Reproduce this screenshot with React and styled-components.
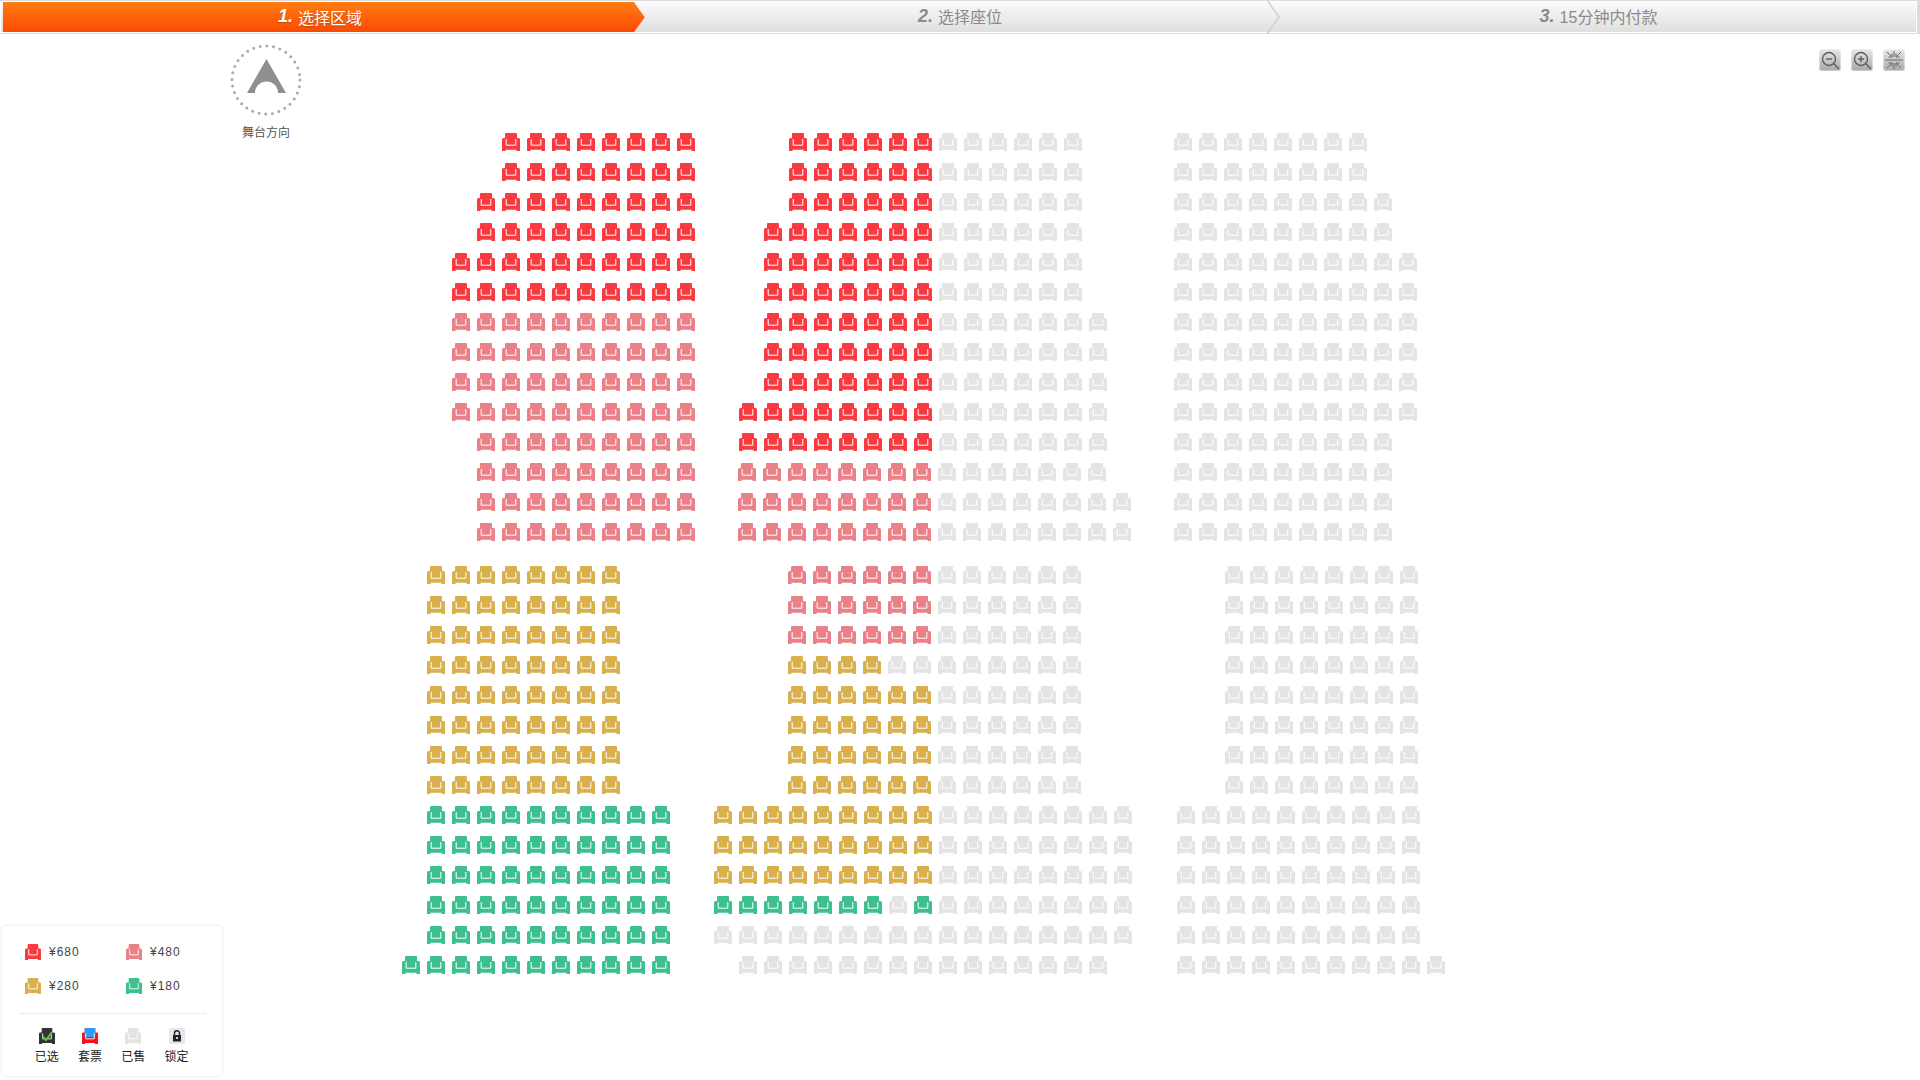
import React from 'react';
import styled, { createGlobalStyle } from 'styled-components';

const TONES = {
  r: '#f93a40',
  p: '#ea8088',
  y: '#dab04c',
  g: '#3cc08f',
  x: '#e4e4e4',
};

const CELL = 25;

// each row: blocks of [page x, seat runs]
const top1 = [[502, 'r8'], [789, 'r6 x6'], [1174, 'x8']];
const low1 = [[427, 'y8'], [788, 'p6 x6'], [1225, 'x8']];
const low2 = [[427, 'y8'], [788, 'y6 x6'], [1225, 'x8']];
const low3 = [[427, 'g10'], [714, 'y9 x8'], [1177, 'x10']];

const upperRows = [
  top1,
  top1,
  [[477, 'r9'], [789, 'r6 x6'], [1174, 'x9']],
  [[477, 'r9'], [764, 'r7 x6'], [1174, 'x9']],
  [[452, 'r10'], [764, 'r7 x6'], [1174, 'x10']],
  [[452, 'r10'], [764, 'r7 x6'], [1174, 'x10']],
  [[452, 'p10'], [764, 'r7 x7'], [1174, 'x10']],
  [[452, 'p10'], [764, 'r7 x7'], [1174, 'x10']],
  [[452, 'p10'], [764, 'r7 x7'], [1174, 'x10']],
  [[452, 'p10'], [739, 'r8 x7'], [1174, 'x10']],
  [[477, 'p9'], [739, 'r8 x7'], [1174, 'x9']],
  [[477, 'p9'], [738, 'p8 x7'], [1174, 'x9']],
  [[477, 'p9'], [738, 'p8 x8'], [1174, 'x9']],
  [[477, 'p9'], [738, 'p8 x8'], [1174, 'x9']],
];

const lowerRows = [
  low1,
  low1,
  low1,
  [[427, 'y8'], [788, 'y4 x8'], [1225, 'x8']],
  low2,
  low2,
  low2,
  low2,
  low3,
  low3,
  low3,
  [[427, 'g10'], [714, 'g7 x1 g1 x8'], [1177, 'x10']],
  [[427, 'g10'], [714, 'x17'], [1177, 'x10']],
  [[402, 'g11'], [739, 'x15'], [1177, 'x11']],
];

const expand = (runs) =>
  runs.split(' ').flatMap((run) => Array(Number(run.slice(1))).fill(run[0]));

function Chair({ tone, size = 18, back }) {
  return (
    <ChairSvg viewBox="0 0 18 18" $size={size} $color={tone}>
      <path d="M4 0H14Q15 0 15 1V5H16.5Q18 5 18 6.5V18H14.5V16.8H3.5V18H0V6.5Q0 5 1.5 5H3V1Q3 0 4 0Z" />
      {back && <path d="M4 0H14Q15 0 15 1V10H3V1Q3 0 4 0Z" fill={back} />}
      <path d="M4.2 6V12.2H13.8V6" fill="none" stroke="#fff" strokeWidth="1" />
    </ChairSvg>
  );
}

function SeatRow({ blocks, first }) {
  let end = 0;
  return (
    <RowLine $first={first}>
      {blocks.map(([x, runs]) => {
        const seats = expand(runs);
        const offset = x - end;
        end = x + seats.length * CELL;
        return (
          <Block key={x} $offset={offset}>
            {seats.map((s, i) => (
              <Cell key={i}>
                <Chair tone={TONES[s]} />
              </Cell>
            ))}
          </Block>
        );
      })}
    </RowLine>
  );
}

function ZoomOut() {
  return (
    <ToolSvg viewBox="0 0 22 22">
      <circle cx="10" cy="10" r="6.5" />
      <path d="M7 10H13" />
      <path d="M15 15L20 20" />
    </ToolSvg>
  );
}

function ZoomIn() {
  return (
    <ToolSvg viewBox="0 0 22 22">
      <circle cx="10" cy="10" r="6.5" />
      <path d="M7 10H13M10 7V13" />
      <path d="M15 15L20 20" />
    </ToolSvg>
  );
}

function Fit() {
  return (
    <ToolSvg viewBox="0 0 22 22" $thin>
      <path d="M11 2V8M2 11H20M11 14V20M4 3L9 8M9 4.5V8H5.5M18 3L13 8M13 4.5V8H16.5M4 19L9 14M9 17.5V14H5.5M18 19L13 14M13 17.5V14H16.5" />
    </ToolSvg>
  );
}

export default function App() {
  return (
    <Page>
      <GlobalStyle />
      <Steps>
        <ActiveStep>
          <StepNo>1.</StepNo> 选择区域
          <Chevron viewBox="0 0 16 34" $right={-3}>
            <path d="M2 0L14 17L2 34" stroke="#fff" />
          </Chevron>
        </ActiveStep>
        <Step $pad={5}>
          <StepNo>2.</StepNo> 选择座位
          <Chevron viewBox="0 0 16 34" $right={-1}>
            <path d="M2 0L14 17L2 34" stroke="#cfcfcf" />
          </Chevron>
        </Step>
        <Step>
          <StepNo>3.</StepNo> 15分钟内付款
        </Step>
      </Steps>

      <TopBar>
        <Compass>
          <svg viewBox="0 0 72 72" width="72" height="72">
            <circle cx="36" cy="36" r="34" fill="none" stroke="#aaa" strokeWidth="3" strokeLinecap="round" strokeDasharray="0 6.7" />
            <path d="M36.5 15L56 49H48A11.5 11.5 0 0 0 25 49H17Z" fill="#8f8f8f" />
          </svg>
          <CompassLabel>舞台方向</CompassLabel>
        </Compass>
        <Tools>
          <ToolButton><ZoomOut /></ToolButton>
          <ToolButton><ZoomIn /></ToolButton>
          <ToolButton><Fit /></ToolButton>
        </Tools>
      </TopBar>

      <SeatMap>
        {upperRows.map((blocks, i) => (
          <SeatRow key={i} blocks={blocks} />
        ))}
        {lowerRows.map((blocks, i) => (
          <SeatRow key={i} blocks={blocks} first={i === 0} />
        ))}
      </SeatMap>

      <Legend>
        <Prices>
          <Price><Chair tone={TONES.r} size={16} />¥680</Price>
          <Price><Chair tone={TONES.p} size={16} />¥480</Price>
          <Price><Chair tone={TONES.y} size={16} />¥280</Price>
          <Price><Chair tone={TONES.g} size={16} />¥180</Price>
        </Prices>
        <Divider />
        <States>
          <StateItem>
            <StateIcon>
              <Chair tone="#333" size={16} />
              <Tick viewBox="0 0 16 16">
                <path d="M4 9L7 12L13 4" />
              </Tick>
            </StateIcon>
            已选
          </StateItem>
          <StateItem>
            <StateIcon><Chair tone="#f5101c" size={16} back="#2f9bf5" /></StateIcon>
            套票
          </StateItem>
          <StateItem>
            <StateIcon><Chair tone={TONES.x} size={16} /></StateIcon>
            已售
          </StateItem>
          <StateItem>
            <StateIcon>
              <LockBox>
                <svg viewBox="0 0 16 16" width="16" height="16">
                  <path d="M5.5 7V5.2A2.5 2.5 0 0 1 10.5 5.2V7" fill="none" stroke="#222" strokeWidth="1.4" />
                  <path d="M4 7H12V13.5H4Z" fill="#222" />
                  <circle cx="8" cy="10" r="1.1" fill="#fff" />
                </svg>
              </LockBox>
            </StateIcon>
            锁定
          </StateItem>
        </States>
      </Legend>
    </Page>
  );
}

const GlobalStyle = createGlobalStyle`
  html, body {
    margin: 0;
    padding: 0;
    background: #fff;
    font-family: "Liberation Sans", "Noto Sans CJK SC", sans-serif;
  }
`;

const Page = styled.div`
  position: relative;
  width: 1920px;
  height: 1080px;
  overflow: hidden;
`;

const Steps = styled.div`
  display: grid;
  grid-template-columns: 645px 635px 1fr;
  box-sizing: border-box;
  height: 34px;
  border: solid #dcdcdc;
  border-width: 1px 3px 1px 0;
  background: linear-gradient(#fbfbfb, #dedede);
  box-shadow: inset 0 0 0 1px #fff;
`;

const Step = styled.div`
  position: relative;
  display: flex;
  align-items: center;
  justify-content: center;
  gap: 5px;
  padding-right: ${(p) => p.$pad || 0}px;
  padding-bottom: 2px;
  font-size: 16px;
  color: #8a8a8a;
`;

const ActiveStep = styled(Step)`
  margin: 1px 0 1px 3px;
  padding-right: 8px;
  padding-bottom: 1px;
  color: #fff;
  background: linear-gradient(#ff7d12, #fb4a03);
  clip-path: polygon(0 0, calc(100% - 11px) 0, 100% 50%, calc(100% - 11px) 100%, 0 100%);
  text-shadow: 0 1px 1px rgba(120, 40, 0, 0.4);
`;

const StepNo = styled.b`
  font-style: italic;
  font-size: 18px;
`;

const Chevron = styled.svg`
  position: absolute;
  top: -1px;
  right: ${(p) => p.$right}px;
  width: 16px;
  height: 34px;
  fill: none;
  stroke-width: 1.4;
`;

const TopBar = styled.div`
  display: flex;
  justify-content: space-between;
  align-items: flex-start;
  height: 99px;
  padding: 0 15px 0 230px;
`;

const Compass = styled.div`
  display: flex;
  flex-direction: column;
  align-items: center;
  width: 72px;
  padding-top: 10px;
  svg {
    display: block;
  }
`;

const CompassLabel = styled.div`
  margin-top: 10px;
  font-size: 12px;
  line-height: 14px;
  color: #555;
  white-space: nowrap;
`;

const Tools = styled.div`
  display: flex;
  gap: 10px;
  margin-top: 15px;
`;

const ToolButton = styled.div`
  width: 22px;
  height: 22px;
  border-radius: 3px;
  background: linear-gradient(#e8e8e8, #a9a9a9);
  box-shadow: inset 0 0 0 1px rgba(255, 255, 255, 0.4);
`;

const ToolSvg = styled.svg`
  display: block;
  width: 22px;
  height: 22px;
  fill: none;
  stroke: ${(p) => (p.$thin ? '#6a6a6a' : '#5c5c5c')};
  stroke-width: ${(p) => (p.$thin ? 1 : 1.4)};
`;

const SeatMap = styled.div`
  display: flex;
  flex-direction: column;
`;

const RowLine = styled.div`
  display: flex;
  height: 30px;
  margin-top: ${(p) => (p.$first ? 13 : 0)}px;
`;

const Block = styled.div`
  display: flex;
  margin-left: ${(p) => p.$offset}px;
`;

const Cell = styled.div`
  width: ${CELL}px;
  flex: none;
`;

const ChairSvg = styled.svg`
  display: block;
  width: ${(p) => p.$size}px;
  height: ${(p) => p.$size}px;
  fill: ${(p) => p.$color};
`;

const Legend = styled.div`
  position: absolute;
  left: 2px;
  top: 926px;
  box-sizing: border-box;
  width: 220px;
  height: 150px;
  padding-top: 18px;
  border-radius: 3px;
  background: #fff;
  box-shadow: 0 0 3px rgba(0, 0, 0, 0.15);
`;

const Prices = styled.div`
  display: grid;
  grid-template-columns: 101px 90px;
  row-gap: 18px;
  padding-left: 23px;
`;

const Price = styled.div`
  display: flex;
  align-items: center;
  gap: 8px;
  height: 16px;
  font-size: 12px;
  letter-spacing: 1px;
  color: #444;
`;

const Divider = styled.div`
  margin: 19px 16px 0 18px;
  border-top: 1px dotted #d8d8d8;
`;

const States = styled.div`
  display: grid;
  grid-template-columns: repeat(4, 43.3px);
  margin-top: 14px;
  padding-left: 23px;
`;

const StateItem = styled.div`
  display: flex;
  flex-direction: column;
  align-items: center;
  gap: 6px;
  font-size: 12px;
  line-height: 14px;
  color: #222;
`;

const StateIcon = styled.div`
  position: relative;
  width: 16px;
  height: 16px;
`;

const Tick = styled.svg`
  position: absolute;
  inset: 0;
  fill: none;
  stroke: #5fc23c;
  stroke-width: 2;
`;

const LockBox = styled.div`
  width: 16px;
  height: 16px;
  border-radius: 2px;
  background: #e6e6ee;
  svg {
    display: block;
  }
`;
